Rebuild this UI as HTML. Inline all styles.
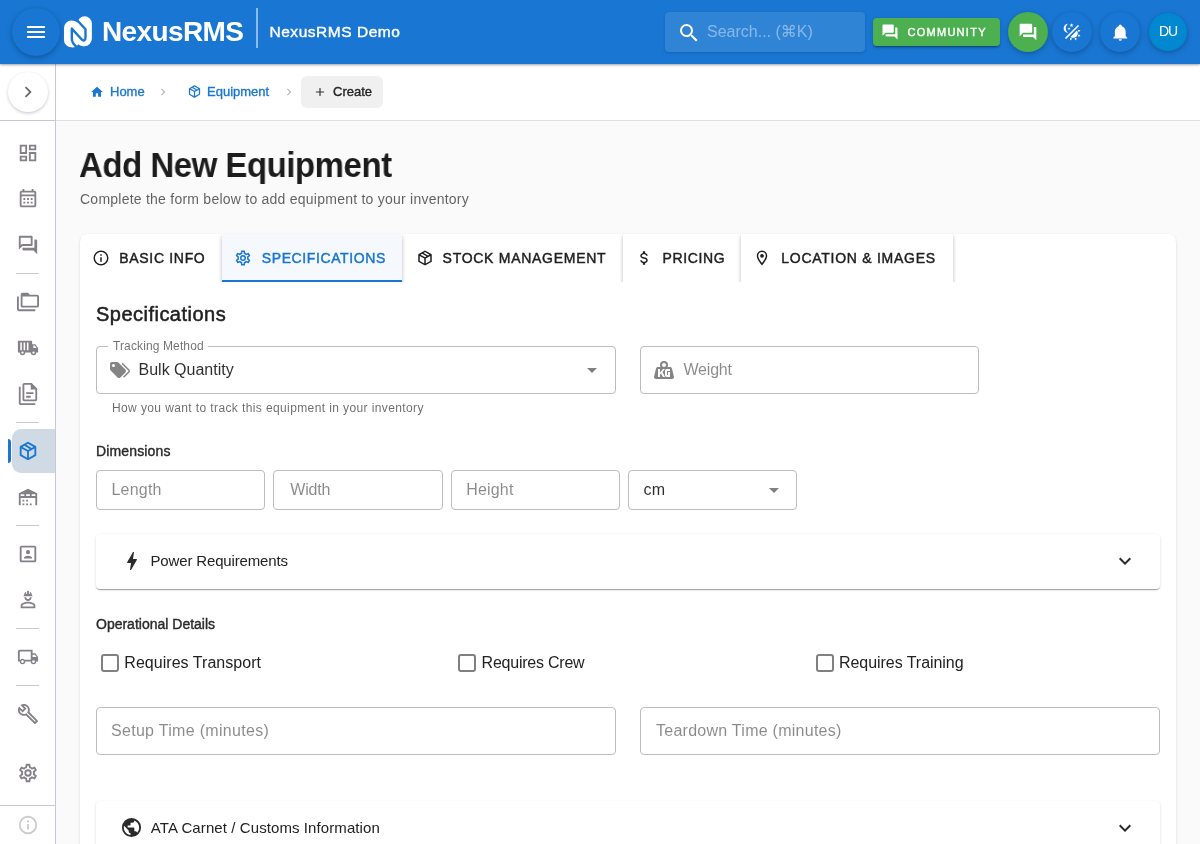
<!DOCTYPE html>
<html lang="en">
<head>
<meta charset="utf-8">
<title>NexusRMS - Add New Equipment</title>
<style>
*{box-sizing:border-box;margin:0;padding:0}
html,body{width:1200px;height:844px;overflow:hidden;background:#fafafa;font-family:"Liberation Sans","DejaVu Sans",sans-serif;color:rgba(0,0,0,.87)}
svg{display:block}
#appbar,#crumb,#card,h1,#sub,#side{will-change:transform}
.abs{position:absolute}
#du{position:absolute;left:0;top:9px;width:38px;text-align:center;font-size:14px;line-height:18px;color:#fff;letter-spacing:-1px}
/* app bar */
#appbar{position:absolute;left:0;top:0;width:1200px;height:64px;background:#1976d2;box-shadow:0 1px 2px rgba(0,0,0,.3),0 1px 4px rgba(0,0,0,.10);z-index:10;color:#fff}
#menubtn{position:absolute;left:12px;top:8px;width:48px;height:48px;border-radius:50%;background:#1976d2;box-shadow:0 2px 6px rgba(0,0,0,.2),0 1px 3px rgba(0,0,0,.10)}
#menubtn svg{position:absolute;left:12px;top:12px;width:24px;height:24px;fill:#fff}
#logo{position:absolute;left:60px;top:10px;width:40px;height:44px}
#brand{position:absolute;left:102px;top:15px;font-size:28px;font-weight:700;line-height:34px;letter-spacing:-.62px;white-space:nowrap}
#vsep{position:absolute;left:256px;top:8px;width:2px;height:40px;background:rgba(255,255,255,.5)}
#org{position:absolute;left:269.500px;top:21.300px;font-size:15.500px;font-weight:400;-webkit-text-stroke:.4px;line-height:22px;white-space:nowrap;letter-spacing:.53px}
#search{position:absolute;left:665px;top:12px;width:200px;height:40px;border-radius:4px;background:rgba(255,255,255,.10);box-shadow:0 1px 3px rgba(0,0,0,.16)}
#search svg{position:absolute;left:12px;top:8px;width:24px;height:24px;fill:#fff}
#search span{position:absolute;left:42px;top:9px;font-size:16px;line-height:22px;color:rgba(255,255,255,.42);white-space:nowrap}
#community{position:absolute;left:873px;top:18px;width:127px;height:28px;border-radius:4px;background:#4caf50;box-shadow:0 3px 1px -2px rgba(0,0,0,.2),0 2px 2px 0 rgba(0,0,0,.14),0 1px 5px 0 rgba(0,0,0,.12)}
#community svg{position:absolute;left:9px;top:6px;width:18px;height:18px;fill:#fff}
#community span{position:absolute;left:34.500px;top:6.800px;font-size:11px;font-weight:400;-webkit-text-stroke:.4px;line-height:14px;letter-spacing:1.27px;white-space:nowrap}
.circ{position:absolute;top:12px;width:40px;height:40px;border-radius:50%;background:#1976d2;box-shadow:0 2px 6px rgba(0,0,0,.18),0 1px 3px rgba(0,0,0,.10)}
.circ svg{position:absolute;fill:#fff}
/* sidebar */
#side{position:absolute;left:0;top:64px;width:56px;height:780px;background:#fff;border-right:1px solid #ccc5d4}
#toggle{position:absolute;left:8px;top:8px;width:40px;height:40px;border-radius:50%;background:#fff;box-shadow:0 1px 3px rgba(0,0,0,.17),0 2px 4px rgba(0,0,0,.06)}
#toggle svg{position:absolute;left:8.500px;top:8.600px;width:22px;height:22px;fill:#6b6870}
#side .hr{position:absolute;left:0;top:56px;width:55px;height:1px;background:#ccc5d4}
.sdiv{position:absolute;left:16px;width:23px;height:1px;background:#c9c9c9}
.sic{position:absolute;left:17px;width:22px;height:22px;fill:#838087}
#active{position:absolute;left:12px;width:43px;height:44px;border-radius:9px 0 0 9px;background:#d0dae5}
#activebar{position:absolute;left:8px;width:3px;height:24px;border-radius:0 3px 3px 0;background:#1976d2}
/* breadcrumb bar */
#crumb{position:absolute;left:56px;top:64px;width:1144px;height:57px;background:#fff;border-bottom:1px solid #e0e0e0}
#crumb .t{position:absolute;top:20px;font-size:13px;line-height:16px;white-space:nowrap;-webkit-text-stroke:.35px}
#crumb .lnk{color:#1976d2}
#crumb svg{position:absolute}
#createchip{position:absolute;left:245px;top:12px;width:82px;height:32px;border-radius:6px;background:#f0f0f0}
/* page */
h1{position:absolute;left:79px;top:143px;font-size:35.200px;line-height:44px;font-weight:700;letter-spacing:-.5px;transform:scaleX(.937);transform-origin:0 0;color:#1c1c1c;white-space:nowrap}
#sub{position:absolute;left:80px;top:189px;font-size:14px;line-height:20px;color:rgba(0,0,0,.62);white-space:nowrap;letter-spacing:.24px}
#card{position:absolute;left:80px;top:234px;width:1096px;height:640px;background:#fff;border-radius:8px 8px 0 0;box-shadow:0 2px 1px -1px rgba(0,0,0,.2),0 1px 1px 0 rgba(0,0,0,.14),0 1px 3px 0 rgba(0,0,0,.12)}
#tabs{position:absolute;left:0;top:0;width:1096px;height:48px;overflow:hidden;border-radius:8px 8px 0 0}
.tab{position:absolute;top:0;height:48px;box-shadow:0 2px 4px rgba(0,0,0,.28);background:#fff}
.tab.act{background:#f5f9fd;border-bottom:2px solid #1976d2}
.tab svg{position:absolute;top:15px;width:18px;height:18px}
.tab span{position:absolute;top:16px;font-size:14px;line-height:16px;font-weight:400;-webkit-text-stroke:.45px;letter-spacing:.6px;white-space:nowrap;color:#1f1f1f}
.tab.act span{color:#1976d2}
.notch{position:absolute;top:-1px;height:1px;background:#fff}
.flabel{position:absolute;top:-8px;font-size:12px;line-height:14px;color:rgba(0,0,0,.56);white-space:nowrap;letter-spacing:.12px}
.helper{position:absolute;font-size:12px;line-height:16px;color:rgba(0,0,0,.58);white-space:nowrap;letter-spacing:.39px}
h2{position:absolute;left:16px;top:66px;font-size:20px;line-height:28px;font-weight:400;-webkit-text-stroke:.5px;white-space:nowrap;color:#212121;letter-spacing:.48px}
.field{position:absolute;border:1px solid #bdbdbd;border-radius:4px;background:#fff}
.field .ph{position:absolute;font-size:16px;line-height:20px;color:rgba(0,0,0,.46);white-space:nowrap;letter-spacing:.2px}
.field .val{position:absolute;font-size:16px;line-height:20px;color:rgba(0,0,0,.82);white-space:nowrap;letter-spacing:.2px}
.lbl{position:absolute;font-size:14px;line-height:18px;font-weight:400;-webkit-text-stroke:.4px;color:#2b2b2b;white-space:nowrap;letter-spacing:0}
.acc{position:absolute;left:16px;width:1064px;background:#fff;border-radius:4px;box-shadow:0 2px 1px -1px rgba(0,0,0,.2),0 1px 1px 0 rgba(0,0,0,.14),0 1px 3px 0 rgba(0,0,0,.12)}
.acc span{position:absolute;left:54.500px;font-size:15px;line-height:20px;white-space:nowrap;color:#222;letter-spacing:0}
.cb{position:absolute;width:18px;height:18px;border:2px solid #808080;border-radius:3px;background:#fff}
.cbl{position:absolute;font-size:16px;line-height:20px;white-space:nowrap;color:#222;letter-spacing:-.05px}
</style>
</head>
<body>
<!-- SIDEBAR -->
<div id="side">
  <div id="toggle"><svg viewBox="0 0 24 24"><path d="M10 6L8.59 7.41 13.17 12l-4.58 4.59L10 18l6-6z"/></svg></div>
  <div class="hr"></div>
  <svg class="sic" style="top:77.5px" viewBox="0 0 24 24"><path d="M19,5V7H15V5H19M9,5V11H5V5H9M19,13V19H15V13H19M9,17V19H5V17H9M21,3H13V9H21V3M11,3H3V13H11V3M21,11H13V21H21V11M11,15H3V21H11V15Z"/></svg>
  <svg class="sic" style="top:123.5px" viewBox="0 0 24 24"><path d="M7,11H9V13H7V11M21,5V19C21,20.11 20.11,21 19,21H5C3.89,21 3,20.1 3,19V5C3,3.9 3.9,3 5,3H6V1H8V3H16V1H18V3H19A2,2 0 0,1 21,5M5,7H19V5H5V7M19,19V9H5V19H19M15,13V11H17V13H15M11,13V11H13V13H11M7,15H9V17H7V15M15,17V15H17V17H15M11,17V15H13V17H11Z"/></svg>
  <svg class="sic" style="top:169.5px" viewBox="0 0 24 24"><path d="M15,4V11H5.17L4,12.17V4H15M16,2H3A1,1 0 0,0 2,3V17L6,13H16A1,1 0 0,0 17,12V3A1,1 0 0,0 16,2M21,6H19V15H6V17A1,1 0 0,0 7,18H18L22,22V7A1,1 0 0,0 21,6Z"/></svg>
  <div class="sdiv" style="top:208.5px"></div>
  <svg class="sic" style="top:226.6px" viewBox="0 0 24 24"><path d="M22,4A2,2 0 0,1 24,6V16A2,2 0 0,1 22,18H6A2,2 0 0,1 4,16V4A2,2 0 0,1 6,2H12L14,4H22M2,6V20H20V22H2A2,2 0 0,1 0,20V11H0V6H2M6,6V16H22V6H6Z"/></svg>
  <svg class="sic" style="top:272.6px" viewBox="0 0 24 24"><path fill-rule="evenodd" d="M1,4H16.5V8H20L23,12V17H21A3,3 0 0,1 15,17H9A3,3 0 0,1 3,17H1V4ZM3.600,6V14.500H5.300V6ZM7.200,6V14.500H8.900V6ZM10.800,6V14.500H12.500V6ZM17.800,9.300V12H21.400L19.400,9.300ZM6,15.700A1.300,1.300 0 0,0 6,18.300A1.300,1.300 0 0,0 6,15.700ZM18,15.700A1.300,1.300 0 0,0 18,18.300A1.300,1.300 0 0,0 18,15.700Z"/></svg>
  <svg class="sic" style="top:318.6px" viewBox="0 0 24 24"><path d="M16,0H8C6.9,0 6,.9 6,2V18C6,19.1 6.9,20 8,20H20C21.1,20 22,19.1 22,18V6L16,0M20,18H8V2H15V7H20V18M4,4V22H20V24H4C2.9,24 2,23.1 2,22V4H4M10,10V12H18V10H10M10,14V16H15V14H10Z"/></svg>
  <div class="sdiv" style="top:358.0px"></div>
  <div id="active" style="top:364.7px"></div><div id="activebar" style="top:374.7px"></div>
  <svg class="sic" style="top:375.7px;fill:#1976d2" viewBox="0 0 24 24"><path d="M21,16.5C21,16.88 20.79,17.21 20.47,17.38L12.57,21.82C12.41,21.94 12.21,22 12,22C11.79,22 11.59,21.94 11.43,21.82L3.53,17.38C3.21,17.21 3,16.88 3,16.5V7.5C3,7.12 3.21,6.79 3.53,6.62L11.43,2.18C11.59,2.06 11.79,2 12,2C12.21,2 12.41,2.06 12.57,2.18L20.47,6.62C20.79,6.79 21,7.12 21,7.5V16.5M12,4.15L10.11,5.22L16,8.61L17.96,7.5L12,4.15M6.04,7.5L12,10.85L13.96,9.75L8.08,6.35L6.04,7.5M5,15.91L11,19.29V12.58L5,9.21V15.91M19,15.91V9.21L13,12.58V19.29L19,15.91Z"/></svg>
  <svg class="sic" style="top:421.7px" viewBox="0 0 24 24"><path d="M6,19H8V21H6V19M12,3L2,8V21H4V13H20V21H22V8L12,3M8,11H4V9H8V11M14,11H10V9H14V11M20,11H16V9H20V11M6,15H8V17H6V15M10,15H12V17H10V15M10,19H12V21H10V19M14,19H16V21H14V19Z"/></svg>
  <div class="sdiv" style="top:461.0px"></div>
  <svg class="sic" style="top:478.5px" viewBox="0 0 24 24"><path d="M19,19H5V5H19M19,3H5A2,2 0 0,0 3,5V19A2,2 0 0,0 5,21H19A2,2 0 0,0 21,19V5C21,3.89 20.1,3 19,3M16.5,16.25C16.5,14.75 13.5,14 12,14C10.5,14 7.5,14.75 7.5,16.25V17H16.5M12,12.25A2.25,2.25 0 0,0 14.25,10A2.25,2.25 0 0,0 12,7.75A2.25,2.25 0 0,0 9.75,10A2.25,2.25 0 0,0 12,12.25Z"/></svg>
  <svg class="sic" style="top:524.9px" viewBox="0 0 24 24"><path d="M16,9C16,14.33 8,14.33 8,9H10C10,11.67 14,11.67 14,9M20,18V21H4V18C4,15.33 9.33,14 12,14C14.67,14 20,15.33 20,18M18.1,18C18.1,17.36 14.97,15.9 12,15.9C9.03,15.9 5.9,17.36 5.9,18V19.1H18.1M12.5,2C12.78,2 13,2.22 13,2.5V5.5H14V3C15.45,3.67 16.34,5.16 16.25,6.75C16.25,6.75 16.95,6.89 17,8H7C7,6.89 7.75,6.75 7.75,6.75C7.66,5.16 8.55,3.67 10,3V5.5H11V2.5C11,2.22 11.22,2 11.5,2Z"/></svg>
  <div class="sdiv" style="top:564.0px"></div>
  <svg class="sic" style="top:581.6px" viewBox="0 0 24 24"><path d="M18,18.5A1.5,1.5 0 0,0 19.5,17A1.5,1.5 0 0,0 18,15.5A1.5,1.5 0 0,0 16.5,17A1.5,1.5 0 0,0 18,18.5M19.5,9.5H17V12H21.46L19.5,9.5M6,18.5A1.5,1.5 0 0,0 7.5,17A1.5,1.5 0 0,0 6,15.5A1.5,1.5 0 0,0 4.5,17A1.5,1.5 0 0,0 6,18.5M20,8L23,12V17H21A3,3 0 0,1 18,20A3,3 0 0,1 15,17H9A3,3 0 0,1 6,20A3,3 0 0,1 3,17H1V6C1,4.89 1.89,4 3,4H17V8H20M3,6V15H3.76C4.31,14.39 5.11,14 6,14C6.89,14 7.69,14.39 8.24,15H15V6H3Z"/></svg>
  <div class="sdiv" style="top:621.0px"></div>
  <svg class="sic" style="top:638.8px" viewBox="0 0 24 24"><path d="M22.61,19L13.53,9.91C14.46,7.57 14,4.81 12.09,2.91C9.79,0.61 6.21,0.4 3.66,2.26L7.5,6.11L6.08,7.52L2.25,3.69C0.39,6.23 0.6,9.82 2.9,12.11C4.76,13.97 7.47,14.46 9.79,13.59L18.9,22.7C19.29,23.09 19.92,23.09 20.31,22.7L22.61,20.4C23,20 23,19.39 22.61,19M19.61,20.59L10.15,11.13C9.54,11.58 8.86,11.85 8.15,11.95C6.79,12.15 5.36,11.74 4.32,10.7C3.37,9.76 2.93,8.5 3,7.26L6.09,10.35L10.33,6.11L7.24,3.02C8.48,2.95 9.73,3.39 10.68,4.33C11.76,5.41 12.17,6.9 11.92,8.29C11.8,9 11.5,9.66 11.04,10.25L20.5,19.7L19.61,20.59Z"/></svg>
  <svg class="sic" style="top:697.7px" viewBox="0 0 24 24"><path d="M12,8A4,4 0 0,1 16,12A4,4 0 0,1 12,16A4,4 0 0,1 8,12A4,4 0 0,1 12,8M12,10A2,2 0 0,0 10,12A2,2 0 0,0 12,14A2,2 0 0,0 14,12A2,2 0 0,0 12,10M10,22C9.75,22 9.54,21.82 9.5,21.58L9.13,18.93C8.5,18.68 7.96,18.34 7.44,17.94L4.95,18.95C4.73,19.03 4.46,18.95 4.34,18.73L2.34,15.27C2.21,15.05 2.27,14.78 2.46,14.63L4.57,12.97L4.5,12L4.57,11L2.46,9.37C2.27,9.22 2.21,8.95 2.34,8.73L4.34,5.27C4.46,5.05 4.73,4.96 4.95,5.05L7.44,6.05C7.96,5.66 8.5,5.32 9.13,5.07L9.5,2.42C9.54,2.18 9.75,2 10,2H14C14.25,2 14.46,2.18 14.5,2.42L14.87,5.07C15.5,5.32 16.04,5.66 16.56,6.05L19.05,5.05C19.27,4.96 19.54,5.05 19.66,5.27L21.66,8.73C21.79,8.95 21.73,9.22 21.54,9.37L19.43,11L19.5,12L19.43,13L21.54,14.63C21.73,14.78 21.79,15.05 21.66,15.27L19.66,18.73C19.54,18.95 19.27,19.04 19.05,18.95L16.56,17.95C16.04,18.34 15.5,18.68 14.87,18.93L14.5,21.58C14.46,21.82 14.25,22 14,22H10M11.25,4L10.88,6.61C9.68,6.86 8.62,7.5 7.85,8.39L5.44,7.35L4.69,8.65L6.8,10.2C6.4,11.37 6.4,12.64 6.8,13.8L4.68,15.36L5.43,16.66L7.86,15.62C8.63,16.5 9.68,17.14 10.87,17.38L11.24,20H12.76L13.13,17.39C14.32,17.14 15.37,16.5 16.14,15.62L18.57,16.66L19.32,15.36L17.2,13.81C17.6,12.64 17.6,11.37 17.2,10.2L19.31,8.65L18.56,7.35L16.15,8.39C15.38,7.5 14.32,6.86 13.12,6.62L12.75,4H11.25Z"/></svg>
  <div class="hr" style="top:741px"></div>
  <svg class="sic" style="top:749.5px;fill:#cbcbcb" viewBox="0 0 24 24"><path d="M11,9H13V7H11M12,20C7.59,20 4,16.41 4,12C4,7.59 7.59,4 12,4C16.41,4 20,7.59 20,12C20,16.41 16.41,20 12,20M12,2A10,10 0 0,0 2,12A10,10 0 0,0 12,22A10,10 0 0,0 22,12A10,10 0 0,0 12,2M11,17H13V11H11V17Z"/></svg>
</div>

<!-- BREADCRUMB -->
<div id="crumb"><svg class="abs" style="left:34px;top:21px;width:14px;height:14px;fill:#1976d2" viewBox="0 0 24 24"><path d="M10,20V14H14V20H19V12H22L12,3L2,12H5V20H10Z"/></svg><span class="t lnk" style="left:54px">Home</span><svg class="abs" style="left:100.10000000000002px;top:20.5px;width:14px;height:14px;fill:#b5b5b5" viewBox="0 0 24 24"><path d="M8.59,16.58L13.17,12L8.59,7.41L10,6L16,12L10,18L8.59,16.58Z"/></svg><svg class="abs" style="left:130.500px;top:20.200px;width:15px;height:15px;fill:#1976d2" viewBox="0 0 24 24"><path d="M21,16.5C21,16.88 20.79,17.21 20.47,17.38L12.57,21.82C12.41,21.94 12.21,22 12,22C11.79,22 11.59,21.94 11.43,21.82L3.53,17.38C3.21,17.21 3,16.88 3,16.5V7.5C3,7.12 3.21,6.79 3.53,6.62L11.43,2.18C11.59,2.06 11.79,2 12,2C12.21,2 12.41,2.06 12.57,2.18L20.47,6.62C20.79,6.79 21,7.12 21,7.5V16.5M12,4.15L10.11,5.22L16,8.61L17.96,7.5L12,4.15M6.04,7.5L12,10.85L13.96,9.75L8.08,6.35L6.04,7.5M5,15.91L11,19.29V12.58L5,9.21V15.91M19,15.91V9.21L13,12.58V19.29L19,15.91Z"/></svg><span class="t lnk" style="left:151px">Equipment</span><svg class="abs" style="left:226.3px;top:20.5px;width:14px;height:14px;fill:#b5b5b5" viewBox="0 0 24 24"><path d="M8.59,16.58L13.17,12L8.59,7.41L10,6L16,12L10,18L8.59,16.58Z"/></svg><div id="createchip"><svg class="abs" style="left:12.4px;top:9px;width:14px;height:14px;fill:#333" viewBox="0 0 24 24"><path d="M19,13H13V19H11V13H5V11H11V5H13V11H19V13Z"/></svg><span class="t" style="left:32px;top:8px;color:#222">Create</span></div></div>

<!-- APP BAR -->
<div id="appbar">
  <div id="menubtn"><svg viewBox="0 0 24 24"><path d="M3 18h18v-2H3v2zm0-5h18v-2H3v2zm0-7v2h18V6H3z"/></svg></div>
  <svg id="logo" viewBox="60 10 40 44"><path fill="#fff" d="M64 28a7.4 7.4 0 0 1 7.4-7.4c2.4 0 4.300.700 6 2.200a7.300 7.300 0 0 1 7.200-6.500a7.300 7.300 0 0 1 7.300 7.300v15a7.600 7.600 0 0 1-7.600 7.600c-2.300 0-4.200-.600-6-2a7.200 7.200 0 0 1-7 3.100a7.400 7.400 0 0 1-7.300-7.400z"/><path fill="none" stroke="#1976d2" stroke-width="2.400" stroke-linejoin="round" d="M76.500 19.500L85.500 29.300V37.800C85.500 40.600 83.400 41 82 39.700L71.800 28.600V38.500C71.800 42.500 74 45 77.500 47.800"/></svg>
  <div id="search"><svg class="abs" style="left:12px;top:8.5px;width:24px;height:24px;fill:#fff" viewBox="0 0 24 24"><path d="M9.5,3A6.5,6.5 0 0,1 16,9.5C16,11.11 15.41,12.59 14.44,13.73L14.71,14H15.5L20.5,19L19,20.5L14,15.5V14.71L13.73,14.44C12.59,15.41 11.11,16 9.5,16A6.5,6.5 0 0,1 3,9.5A6.5,6.5 0 0,1 9.5,3M9.5,5C7,5 5,7 5,9.5C5,12 7,14 9.5,14C12,14 14,12 14,9.5C14,7 12,5 9.5,5Z"/></svg><span>Search... (⌘K)</span></div>
  <div id="community"><svg class="abs" style="left:8px;top:5px;width:18px;height:18px;fill:#fff" viewBox="0 0 24 24"><path d="M17,12V3A1,1 0 0,0 16,2H3A1,1 0 0,0 2,3V17L6,13H16A1,1 0 0,0 17,12M21,6H19V15H6V17A1,1 0 0,0 7,18H18L22,22V7A1,1 0 0,0 21,6Z"/></svg><span>COMMUNITY</span></div>
  <div class="circ" style="left:1008px;background:#4caf50"><svg class="abs" style="left:10px;top:10px;width:20px;height:20px;fill:#fff" viewBox="0 0 24 24"><path d="M17,12V3A1,1 0 0,0 16,2H3A1,1 0 0,0 2,3V17L6,13H16A1,1 0 0,0 17,12M21,6H19V15H6V17A1,1 0 0,0 7,18H18L22,22V7A1,1 0 0,0 21,6Z"/></svg></div>
  <div class="circ" style="left:1052px"><svg class="abs" style="left:10px;top:10px;width:20px;height:20px;fill:#fff" viewBox="0 0 24 24"><path d="M7.5,2C5.71,3.15 4.5,5.18 4.5,7.5C4.5,9.82 5.71,11.85 7.53,13C4.46,13 2,10.54 2,7.5A5.5,5.5 0 0,1 7.5,2M19.07,3.5L20.5,4.93L4.93,20.5L3.5,19.07L19.07,3.5M12.89,5.93L11.41,5L9.97,6L10.39,4.3L9,3.24L10.75,3.12L11.33,1.47L12,3.1L13.73,3.13L12.38,4.26L12.89,5.93M9.59,9.54L8.43,8.81L7.31,9.59L7.65,8.27L6.56,7.44L7.92,7.35L8.37,6.06L8.88,7.33L10.24,7.36L9.19,8.23L9.59,9.54M19,13.5A5.5,5.5 0 0,1 13.5,19C12.28,19 11.15,18.6 10.24,17.93L17.93,10.24C18.6,11.15 19,12.28 19,13.5M14.6,20.08L17.37,18.93L17.13,22.28L14.6,20.08M18.93,17.38L20.08,14.61L22.28,17.15L18.93,17.38M20.08,12.42L18.94,9.64L22.28,9.88L20.08,12.42M9.63,18.93L12.4,20.08L9.87,22.27L9.63,18.93Z"/></svg></div>
  <div class="circ" style="left:1100px"><svg class="abs" style="left:10.750px;top:10.700px;width:18.500px;height:18.500px;fill:#fff" viewBox="0 0 24 24"><path d="M21,19V20H3V19L5,17V11C5,7.9 7.03,5.17 10,4.29C10,4.19 10,4.1 10,4A2,2 0 0,1 12,2A2,2 0 0,1 14,4C14,4.1 14,4.19 14,4.29C16.97,5.17 19,7.9 19,11V17L21,19M14,21A2,2 0 0,1 12,23A2,2 0 0,1 10,21"/></svg></div>
  <div class="circ" style="left:1149px;top:13px;width:38px;height:38px;background:#0288d1"><span id="du">DU</span></div>
  <div id="brand">NexusRMS</div>
  <div id="vsep"></div>
  <div id="org">NexusRMS Demo</div>
</div>

<h1>Add New Equipment</h1>
<div id="sub">Complete the form below to add equipment to your inventory</div>

<div id="card">
<div id="tabs">
  <div class="tab" style="left:0px;width:142px"><svg style="left:11.7px;fill:#1f1f1f" viewBox="0 0 24 24"><path d="M11,9H13V7H11M12,20C7.59,20 4,16.41 4,12C4,7.59 7.59,4 12,4C16.41,4 20,7.59 20,12C20,16.41 16.41,20 12,20M12,2A10,10 0 0,0 2,12A10,10 0 0,0 12,22A10,10 0 0,0 22,12A10,10 0 0,0 12,2M11,17H13V11H11V17Z"/></svg><span style="left:39.300px;letter-spacing:.68px">BASIC INFO</span></div>
  <div class="tab" style="left:322px;width:220.5px"><svg style="left:13.7px;fill:#1f1f1f" viewBox="0 0 24 24"><path d="M21,16.5C21,16.88 20.79,17.21 20.47,17.38L12.57,21.82C12.41,21.94 12.21,22 12,22C11.79,22 11.59,21.94 11.43,21.82L3.53,17.38C3.21,17.21 3,16.88 3,16.5V7.5C3,7.12 3.21,6.79 3.53,6.62L11.43,2.18C11.59,2.06 11.79,2 12,2C12.21,2 12.41,2.06 12.57,2.18L20.47,6.62C20.79,6.79 21,7.12 21,7.5V16.5M12,4.15L10.11,5.22L16,8.61L17.96,7.5L12,4.15M6.04,7.5L12,10.85L13.96,9.75L8.08,6.35L6.04,7.5M5,15.91L11,19.29V12.58L5,9.21V15.91M19,15.91V9.21L13,12.58V19.29L19,15.91Z"/></svg><span style="left:40.6px;letter-spacing:.72px">STOCK MANAGEMENT</span></div>
  <div class="tab" style="left:542.5px;width:118.5px"><svg style="left:12.5px;fill:#1f1f1f" viewBox="0 0 24 24"><path d="M7,15H9C9,16.08 10.37,17 12,17C13.63,17 15,16.08 15,15C15,13.9 13.96,13.5 11.76,12.97C9.64,12.44 7,11.78 7,9C7,7.21 8.47,5.69 10.5,5.18V3H13.5V5.18C15.53,5.69 17,7.21 17,9H15C15,7.92 13.63,7 12,7C10.37,7 9,7.92 9,9C9,10.1 10.04,10.5 12.24,11.03C14.36,11.56 17,12.22 17,15C17,16.79 15.53,18.31 13.5,18.82V21H10.5V18.82C8.47,18.31 7,16.79 7,15Z"/></svg><span style="left:40.1px">PRICING</span></div>
  <div class="tab" style="left:661px;width:211.5px"><svg style="left:12.3px;fill:#1f1f1f" viewBox="0 0 24 24"><path d="M12,6.5A2.5,2.5 0 0,1 14.5,9A2.5,2.5 0 0,1 12,11.5A2.5,2.5 0 0,1 9.5,9A2.5,2.5 0 0,1 12,6.5M12,2A7,7 0 0,1 19,9C19,14.25 12,22 12,22C12,22 5,14.25 5,9A7,7 0 0,1 12,2M12,4A5,5 0 0,0 7,9C7,10 7,12 12,18.71C17,12 17,10 17,9A5,5 0 0,0 12,4Z"/></svg><span style="left:40.3px;letter-spacing:.73px">LOCATION &amp; IMAGES</span></div>
  <div class="tab act" style="left:142px;width:180px"><svg style="left:11.9px;fill:#1976d2" viewBox="0 0 24 24"><path d="M12,8A4,4 0 0,1 16,12A4,4 0 0,1 12,16A4,4 0 0,1 8,12A4,4 0 0,1 12,8M12,10A2,2 0 0,0 10,12A2,2 0 0,0 12,14A2,2 0 0,0 14,12A2,2 0 0,0 12,10M10,22C9.75,22 9.54,21.82 9.5,21.58L9.13,18.93C8.5,18.68 7.96,18.34 7.44,17.94L4.95,18.95C4.73,19.03 4.46,18.95 4.34,18.73L2.34,15.27C2.21,15.05 2.27,14.78 2.46,14.63L4.57,12.97L4.5,12L4.57,11L2.46,9.37C2.27,9.22 2.21,8.95 2.34,8.73L4.34,5.27C4.46,5.05 4.73,4.96 4.95,5.05L7.44,6.05C7.96,5.66 8.5,5.32 9.13,5.07L9.5,2.42C9.54,2.18 9.75,2 10,2H14C14.25,2 14.46,2.18 14.5,2.42L14.87,5.07C15.5,5.32 16.04,5.66 16.56,6.05L19.05,5.05C19.27,4.96 19.54,5.05 19.66,5.27L21.66,8.73C21.79,8.95 21.73,9.22 21.54,9.37L19.43,11L19.5,12L19.43,13L21.54,14.63C21.73,14.78 21.79,15.05 21.66,15.27L19.66,18.73C19.54,18.95 19.27,19.04 19.05,18.95L16.56,17.95C16.04,18.34 15.5,18.68 14.87,18.93L14.5,21.58C14.46,21.82 14.25,22 14,22H10M11.25,4L10.88,6.61C9.68,6.86 8.62,7.5 7.85,8.39L5.44,7.35L4.69,8.65L6.8,10.2C6.4,11.37 6.4,12.64 6.8,13.8L4.68,15.36L5.43,16.66L7.86,15.62C8.63,16.5 9.68,17.14 10.87,17.38L11.24,20H12.76L13.13,17.39C14.32,17.14 15.37,16.5 16.14,15.62L18.57,16.66L19.32,15.36L17.2,13.81C17.6,12.64 17.6,11.37 17.2,10.2L19.31,8.65L18.56,7.35L16.15,8.39C15.38,7.5 14.32,6.86 13.12,6.62L12.75,4H11.25Z"/></svg><span style="left:39.8px">SPECIFICATIONS</span></div>
</div>
  <h2>Specifications</h2>
  <div class="field" style="left:16px;top:112px;width:520px;height:48px"><div class="notch" style="left:11px;width:100px"></div><span class="flabel" style="left:16px">Tracking Method</span><svg class="abs" style="left:11px;top:11px;width:24px;height:24px;fill:#858585" viewBox="0 0 24 24"><path d="M5.5,9A1.5,1.5 0 0,0 7,7.5A1.5,1.5 0 0,0 5.5,6A1.5,1.5 0 0,0 4,7.5A1.5,1.5 0 0,0 5.5,9M17.41,11.58C17.77,11.94 18,12.44 18,13C18,13.55 17.78,14.05 17.41,14.41L12.41,19.41C12.05,19.77 11.55,20 11,20C10.45,20 9.95,19.78 9.58,19.41L2.59,12.42C2.22,12.05 2,11.55 2,11V6C2,4.89 2.89,4 4,4H9C9.55,4 10.05,4.22 10.41,4.58L17.41,11.58M13.54,5.71L14.54,4.71L21.41,11.58C21.78,11.94 22,12.45 22,13C22,13.55 21.78,14.05 21.42,14.41L16.04,19.79L15.04,18.79L20.75,13L13.54,5.71Z"/></svg><span class="val" style="left:41.5px;top:13px;letter-spacing:0">Bulk Quantity</span><svg class="abs" style="left:483px;top:10.500px;width:24px;height:24px;fill:#808080" viewBox="0 0 24 24"><path d="M7,10L12,15L17,10H7Z"/></svg></div>
  <div class="helper" style="left:32px;top:166px">How you want to track this equipment in your inventory</div>
  <div class="field" style="left:560px;top:112px;width:339px;height:48px"><svg class="abs" style="left:11px;top:11px;width:24px;height:24px;fill:#858585" viewBox="0 0 24 24"><path d="M12,3A4,4 0 0,1 16,7C16,7.73 15.81,8.41 15.46,9H18C18.95,9 19.75,9.67 19.95,10.56C21.96,18.57 22,18.78 22,19A2,2 0 0,1 20,21H4A2,2 0 0,1 2,19C2,18.78 2.04,18.57 4.05,10.56C4.25,9.67 5.05,9 6,9H8.54C8.19,8.41 8,7.73 8,7A4,4 0 0,1 12,3M12,5A2,2 0 0,0 10,7A2,2 0 0,0 12,9A2,2 0 0,0 14,7A2,2 0 0,0 12,5M6,11V19H8V16.5L9,15.5L11,19H13L10.5,14L13,11H11L8,14.5V11H6M15,11C13.89,11 13,11.89 13,13V17C13,18.11 13.89,19 15,19H18V14H16V17H15V13H18V11H15Z"/></svg><span class="ph" style="left:42.500px;top:13px;letter-spacing:-.2px">Weight</span></div>
  <div class="lbl" style="left:16px;top:208px;letter-spacing:.15px">Dimensions</div>
  <div class="field" style="left:16px;top:236px;width:169.33px;height:40px"><span class="ph" style="left:14.500px;top:9px">Length</span></div>
  <div class="field" style="left:193.33px;top:236px;width:169.33px;height:40px"><span class="ph" style="left:16px;top:9px;letter-spacing:-.18px">Width</span></div>
  <div class="field" style="left:370.67px;top:236px;width:169.33px;height:40px"><span class="ph" style="left:14.500px;top:9px">Height</span></div>
  <div class="field" style="left:548px;top:236px;width:169.33px;height:40px"><span class="val" style="left:14.500px;top:9px">cm</span><svg class="abs" style="left:132.500px;top:7px;width:24px;height:24px;fill:#808080" viewBox="0 0 24 24"><path d="M7,10L12,15L17,10H7Z"/></svg></div>
  <div class="acc" style="top:300px;height:54.500px"><svg class="abs" style="left:24px;top:14.5px;width:24px;height:24px;fill:#2a2a2a" viewBox="0 0 24 24"><path d="M11 21h-1l1-7H7.5c-.58 0-.57-.32-.38-.66.19-.34.05-.08.07-.12C8.48 10.94 10.42 7.54 13 3h1l-1 7h3.5c.49 0 .56.33.47.51l-.07.15C12.96 17.55 11 21 11 21z"/></svg><span style="top:16.800px;letter-spacing:-.15px">Power Requirements</span><svg class="abs" style="left:1017px;top:14.7px;width:24px;height:24px;fill:#2a2a2a" viewBox="0 0 24 24"><path d="M7.41,8.58L12,13.17L16.59,8.58L18,10L12,16L6,10L7.41,8.58Z"/></svg></div>
  <div class="lbl" style="left:16px;top:381px">Operational Details</div>
  <div class="cb" style="left:21px;top:420px"></div><span class="cbl" style="left:44.3px;top:418.5px;letter-spacing:.04px">Requires Transport</span>
  <div class="cb" style="left:378.3px;top:420px"></div><span class="cbl" style="left:401.6px;top:418.5px;letter-spacing:-.23px">Requires Crew</span>
  <div class="cb" style="left:735.7px;top:420px"></div><span class="cbl" style="left:759.0px;top:418.5px">Requires Training</span>
  <div class="field" style="left:16px;top:473px;width:520px;height:48px"><span class="ph" style="left:14px;top:13px;letter-spacing:.3px">Setup Time (minutes)</span></div>
  <div class="field" style="left:560px;top:473px;width:520px;height:48px"><span class="ph" style="left:15px;top:13px;letter-spacing:.26px">Teardown Time (minutes)</span></div>
  <div class="acc" style="top:567px;height:54.500px"><svg class="abs" style="left:24px;top:15px;width:23px;height:23px;fill:#2a2a2a" viewBox="0 0 24 24"><path d="M17.9,17.39C17.64,16.59 16.89,16 16,16H15V13A1,1 0 0,0 14,12H8V10H10A1,1 0 0,0 11,9V7H13A2,2 0 0,0 15,5V4.59C17.93,5.77 20,8.64 20,12C20,14.08 19.2,15.97 17.9,17.39M11,19.93C7.05,19.44 4,16.08 4,12C4,11.38 4.08,10.78 4.21,10.21L9,15V16A2,2 0 0,0 11,18M12,2A10,10 0 0,0 2,12A10,10 0 0,0 12,22A10,10 0 0,0 22,12A10,10 0 0,0 12,2Z"/></svg><span style="top:16.800px;left:54.800px;letter-spacing:.09px">ATA Carnet / Customs Information</span><svg class="abs" style="left:1017px;top:14.7px;width:24px;height:24px;fill:#2a2a2a" viewBox="0 0 24 24"><path d="M7.41,8.58L12,13.17L16.59,8.58L18,10L12,16L6,10L7.41,8.58Z"/></svg></div>
</div>
</body>
</html>
